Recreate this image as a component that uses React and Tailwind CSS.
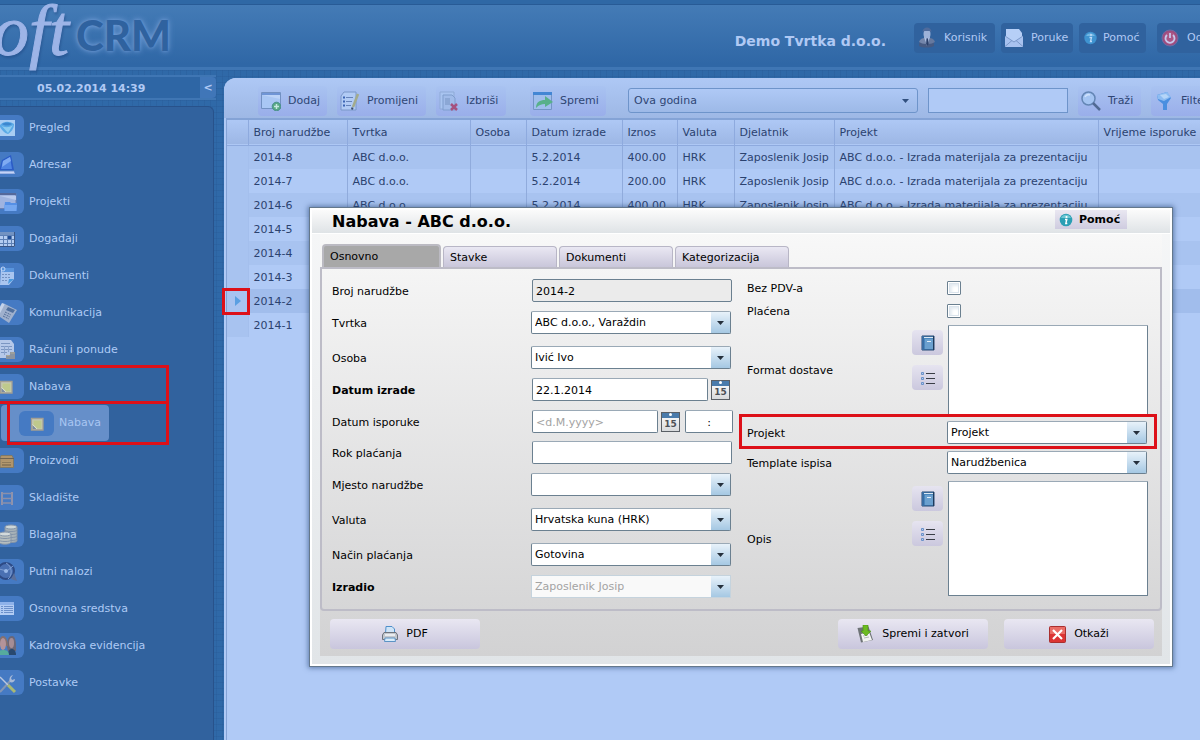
import React from "react";

const I = ({ w = 20, h = 20, children, className = "" }) => (
  <svg width={w} height={h} viewBox={`0 0 ${w} ${h}`} className={`shrink-0 ${className}`} aria-hidden="true">
    {children}
  </svg>
);

/* ---------- navigation icons, drawn on the 24x25 tile ---------- */
const note = (x) => (
  <g>
    <path d={`M${x} 7.500h11.500v11.500h-11.500z`} fill="#c6c9b4" stroke="#a39f93" strokeWidth="1.300" />
    <path d={`M${x + 2} 9.500h8v8h-4l-4-4z`} fill="#bfc98c" />
    <path d={`M${x + 1} 14l4 4h-4z`} fill="#7d8ba0" />
    <path d={`M${x + 1} 13.500l4.500 4.500`} stroke="#dadfc6" />
  </g>
);

const NAV = [
  ["Pregled", <g key="i"><path d="M0 5h15v16H0z" fill="#a9cdf3" /><path d="M0 10c4-4 9-4 14-1 0 5-3 8-6 10-4-1-6-4-8-7z" fill="#5aa9e6" /><path d="M1 10c3 3 8 3 12 0l-5 8z" fill="#8ccbf0" /><path d="M2 9c3-2 7-2 10 0-3 2-7 2-10 0z" fill="#3c87cf" /></g>],
  ["Adresar", <g key="i"><path d="M2 8l9-5 3 15H0v-3z" fill="#2b5cc6" /><path d="M3 9l7-4 2 12H1z" fill="#4f85e2" /><path d="M3 9l7-4 1 4-9 6z" fill="#7fabf2" /><path d="M0 19h14l1 3H0z" fill="#9db3e4" /><path d="M0 20.500h14" stroke="#c4d5f6" /></g>],
  ["Projekti", <g key="i"><path d="M-1 4.500h17v15H-1z" fill="#9fb4e0" stroke="#6d82b4" /><path d="M0 4h16v2H0z" fill="#54699b" /><path d="M0 7l16 4V7z" fill="#b9caee" /><path d="M5 13h5l1 1h6v8H4z" fill="#5590e6" /><path d="M4 16h13l-1 6H5z" fill="#74a7f0" /></g>],
  ["Događaji", <g key="i"><path d="M0 6h15v15H0z" fill="#b4ccf1" /><path d="M0 9.500h15M0 13.500h15M0 17.500h15M3.500 9v12M7.500 9v12M11.500 9v12" stroke="#5d80b5" fill="none" /><path d="M8 10h3v3H8z" fill="#1f4d96" /><path d="M0 6h15v3H0z" fill="#7393c2" /><path d="M14.500 6v14.500H0" stroke="#3b5685" fill="none" /></g>],
  ["Dokumenti", <g key="i"><path d="M1 5h13v11l-5 6H0z" fill="#a9c5ef" /><path d="M2 5h12v4H2z" fill="#5a95dc" /><path d="M2 11.500h9M2 14.500h9M2 17.500h5" stroke="#7391c0" strokeDasharray="2 1" /><path d="M8 21l1-5h5z" fill="#4a9ade" /><circle cx="3" cy="6" r="2" fill="none" stroke="#bed4f7" /></g>],
  ["Komunikacija", <g key="i"><path d="M5 4l12 6-8 13-9-6v-6z" fill="#9fb0cd" /><path d="M2 3l3 1-7 13-3-2z" fill="#c5d2e9" /><path d="M8 7l7 3-2 3-7-3z" fill="#506f9d" /><path d="M5 12l6 3M4 14l6 3M3 16l6 3" stroke="#536c96" strokeDasharray="2 1" /></g>],
  ["Računi i ponude", <g key="i"><path d="M0 3h11l3 4v14H0z" fill="#b5c8e9" /><path d="M1 6.500h9M1 9.500h11M1 12.500h11M1 15.500h6" stroke="#7b96c2" /><path d="M4.500 9v9M8.500 9v6" stroke="#8ba4cd" /><path d="M10 15h5v7h-5zM6 18h4v4H6z" fill="#8b939f" /><path d="M10.500 16h4M6.500 18.500h3" stroke="#b0ab97" /></g>],
  ["Nabava", <g key="i">{note(0.5)}</g>],
  ["Proizvodi", <g key="i"><path d="M1 7.500h11l1.500 3v9H0v-9z" fill="#b0946b" stroke="#7f7968" /><path d="M0 10.500h14" stroke="#6f6350" /><path d="M2 13h9v5H2z" fill="#8f7a5a" /><path d="M2 13.500h9M2 15.500h9" stroke="#b3986e" /></g>],
  ["Skladište", <g key="i"><path d="M2 7v13M12 7v13" stroke="#8f93ad" strokeWidth="2" /><path d="M2 8.500h10M2 13.500h10M2 18h10" stroke="#8b90ab" strokeWidth="1.500" /></g>],
  ["Blagajna", <g key="i" stroke="#8494a8"><path d="M5 5v14c0 2 12 2 12 0V5z" fill="#a7b2b8" /><ellipse cx="11" cy="5" rx="6" ry="2" fill="#cdd6d8" /><path d="M5 8c0 2 12 2 12 0M5 11c0 2 12 2 12 0M5 14c0 2 12 2 12 0M5 17c0 2 12 2 12 0" fill="none" /><path d="M-1 12v8c0 3 12 3 12 0v-8z" fill="#b5bdbe" /><ellipse cx="5" cy="12" rx="6" ry="2" fill="#d3dadb" /><path d="M-1 15c0 2 12 2 12 0M-1 18c0 2 12 2 12 0" fill="none" /></g>],
  ["Putni nalozi", <g key="i"><circle cx="6" cy="12" r="8" fill="#4a70b2" stroke="#2d4a85" strokeWidth="2" /><path d="M6 4c6 3 7 12 2 16M-1 10l8 2 6-5" stroke="#7f9ed2" fill="none" /><circle cx="6" cy="12" r="2" fill="#98b8e8" /><path d="M11 20l3-6 3 8z" fill="#5a6f9b" /></g>],
  ["Osnovna sredstva", <g key="i"><path d="M0 6h14v13H0z" fill="#b3ccf4" /><path d="M0 6h14v3H0z" fill="#8fb2ea" /><path d="M1 10.500h2M4 10.500h9M1 12.500h2M4 12.500h9M1 14.500h2M4 14.500h9M1 16.500h2M4 16.500h9" stroke="#6c90cb" /></g>],
  ["Kadrovska evidencija", <g key="i"><path d="M7 14c0-8 2-11 5-11s4 5 4 10v5H8z" fill="#6b6777" /><ellipse cx="11.500" cy="10" rx="2.500" ry="5" fill="#a58d95" /><path d="M8 22c0-5 2-6 4-6s4 2 4 6z" fill="#29496f" /><path d="M-1 13c0-8 2-10 4-10s5 3 5 10z" fill="#84706f" /><ellipse cx="3" cy="11" rx="3" ry="6" fill="#b3939a" /><path d="M-2 22c0-4 2-5 5-5s6 1 6 5z" fill="#56ab9d" /></g>],
  ["Postavke", <g key="i"><path d="M0 22L11 10" stroke="#8496b4" strokeWidth="2" /><path d="M13 5c-4 1-4 5-3 7 2 1 5 0 5-3l-3 1-1-2z" fill="#a9bad7" /><path d="M0 7l8 8" stroke="#b9c7e0" strokeWidth="1.500" /><path d="M8 15l7 7" stroke="#a9b973" strokeWidth="3" /></g>],
];

function NavItem({ label, icon, children }) {
  return (
    <li className="relative">
      <a href="#" className="flex h-[37px] items-center gap-[5px]">
        <span className="h-[25px] w-6 overflow-hidden rounded-r-md bg-[#457ac3]">
          <I w={24} h={25}>{icon}</I>
        </span>
        {label}
      </a>
      {children}
    </li>
  );
}

function Sidebar() {
  return (
    <aside className="flex w-[216px] shrink-0 flex-col pt-[5px]">
      <div className="flex h-[25px] border-y-2 border-[#3f76b4] bg-[#2e66a5]">
        <time className="flex-1 pl-[37px] text-[11px] leading-[23px] font-bold text-[#b0c9f4]">05.02.2014 14:39</time>
        <button aria-label="Sakrij izbornik" className="w-4 rounded-r bg-[#4076b8] font-bold text-[#b0c9f4]">&lt;</button>
      </div>
      <nav className="mt-[6px] mr-0.5 flex-1 rounded-tr-md border-t border-r border-[#28528b] bg-[#31629e] pt-0.5 text-[#aecaf5]">
        <ul>
          {NAV.map(([label, icon]) => (
            <NavItem key={label} label={label} icon={icon}>
              {label === "Nabava" && (
                <>
                  <div className="pointer-events-none absolute -top-[3px] -left-[3px] h-[39px] w-[172px] border-3 border-[#dd1018]" />
                  <ul className="relative h-[37px]">
                    <li>
                      <a href="#" className="ml-px flex h-9 w-[108px] items-center gap-[5px] rounded-sm bg-[#668fc9] pl-[18px] text-[#a9c6f2]">
                        <span className="h-[25px] w-[35px] rounded-md bg-[#457ac3]">
                          <I w={35} h={25}>{note(12.5)}</I>
                        </span>
                        Nabava
                      </a>
                    </li>
                    <li aria-hidden="true" className="pointer-events-none absolute -top-1 left-[7px] h-11 w-[162px] border-3 border-[#dd1018]" />
                  </ul>
                </>
              )}
            </NavItem>
          ))}
        </ul>
      </nav>
    </aside>
  );
}

function HeaderButton({ icon, label, className }) {
  return (
    <button className={`flex h-[30px] shrink-0 items-center rounded bg-[#30629e] text-[#b0c9f4] ${className}`}>
      {icon}
      {label}
    </button>
  );
}

function Header() {
  return (
    <header className="h-[70px] border-b-3 border-[#3f76b4] bg-[linear-gradient(#2f68a5_0,#2f68a5_4px,#285b96_4px,#285b96_5px,#447bb6_5px,#2f67a6_64px)]">
      <div className="-mr-10 flex h-full items-start">
        <div className="flex h-[67px] items-start">
          <div className="flex w-[69px] justify-end font-['Liberation_Serif'] text-[72px] leading-[62px] text-[#9db4e7] italic drop-shadow-[1px_2px_1px_rgba(30,70,130,0.5)] [-webkit-text-stroke:1px_#9db4e7]">
            Soft
          </div>
          <div className="pl-[7px] font-[Lato] text-[42px] leading-[70px] font-black text-[#2f629f] [text-shadow:0_0_6px_#7aa4dc,0_0_3px_#5a8ac8]">
            CRM
          </div>
        </div>
        <div className="mt-[23px] ml-auto flex items-center">
          <div className="mt-[5px] mr-[28px] text-[14px] font-bold text-[#b0c9f4]">Demo Tvrtka d.o.o.</div>
          <HeaderButton label="Korisnik" className="mr-1.5 w-[81px] gap-2 pl-1" icon={
            <I w={18} h={22}><path d="M1 19c0-6 3-8 8-8s7 2 7 8c-4 2-11 2-15 0z" fill="#465a82" /><path d="M2 13c2-2 4-2 5-2l1 6c-3 0-5-1-7-2z" fill="#7486ab" /><path d="M16 13c-2-2-4-2-5-2l-1 6c3 0 5-1 7-2z" fill="#66799f" /><path d="M6 10h6l-3 9z" fill="#b2c4e6" /><path d="M8.500 11h1.500l.5 6-1.200 2-1.200-2z" fill="#2a3f69" /><ellipse cx="9" cy="7" rx="3.500" ry="4.500" fill="#9db2d8" /><path d="M4.500 5c0-6 9-6 9 0l-2-1H6.500z" fill="#4f6b9c" /></I>} />
          <HeaderButton label="Poruke" className="mr-1.5 w-[72px] gap-2 pl-1" icon={
            <I w={18} h={20}><path d="M0 8h18v11H0z" fill="#9ab5e3" /><path d="M1 1h13l3 4v9H1z" fill="#b6cff7" /><path d="M0 8l9 6 9-6v11H0z" fill="#a8c2ef" /><path d="M0 18.500l7-6M18 18.500l-7-6M0 8l9 6 9-6" stroke="#7b98c9" fill="none" /></I>} />
          <HeaderButton label="Pomoć" className="mr-[11px] w-[67px] gap-[6px] pl-[5px]" icon={
            <I w={13} h={14}><circle cx="6.500" cy="7" r="6.200" fill="#3f93d0" /><path d="M2 5a5 5 0 0 1 9 0z" fill="#73b7e4" /><circle cx="7" cy="4" r="1" fill="#bddaf8" /><path d="M5.500 6.500h2l-1 4h1.500" stroke="#bddaf8" fill="none" strokeWidth="1.300" /></I>} />
          <HeaderButton label="Odjava" className="w-[83px] gap-2 pl-1" icon={
            <I w={18} h={18}><circle cx="9" cy="9" r="8" fill="#9c4d80" stroke="#6d6ca4" /><circle cx="9" cy="9" r="6" fill="#ab5685" /><path d="M6 6a4.500 4.500 0 1 0 6 0M9 4v5" stroke="#c5c7ec" fill="none" strokeWidth="1.800" /></I>} />
        </div>
      </div>
    </header>
  );
}

function ToolButton({ icon, label, className }) {
  return (
    <button className={`flex h-[30px] shrink-0 items-center gap-[7px] rounded-sm bg-gradient-to-b from-[#a9c3f1] to-[#9aaeea] pl-[3px] text-[#2f4674] ${className}`}>
      <I>{icon}</I>
      {label}
    </button>
  );
}

function Toolbar() {
  return (
    <div className="-mr-[19px] flex h-10 items-start rounded-tl-xl bg-gradient-to-b from-[#aec8f5] to-[#9eb8e5] pt-2 pl-[34px]">
      <ToolButton label="Dodaj" className="mr-2.5 w-[69px]" icon={<g><path d="M.5 1.500h19v16H.5z" fill="#a9c7f4" stroke="#7291c2" /><path d="M1 2h18v2H1z" fill="#6f95d6" /><path d="M1 4l18 4V4z" fill="#bbd3f8" /><circle cx="15.500" cy="15.500" r="4.300" fill="#57a884" stroke="#4a8f8d" /><path d="M15.500 13v5M13 15.500h5" stroke="#c7e8e0" strokeWidth="1.500" /></g>} />
      <ToolButton label="Promijeni" className="mr-2.5 w-[89px]" icon={<g><path d="M4 1h12v18H1V5z" fill="#b1cbf5" stroke="#7b97c8" /><path d="M6 6.500h7M6 10.500h6M6 14.500h5" stroke="#6784ba" /><path d="M3 6.500h2M3 10.500h2M3 14.500h2" stroke="#3b64b3" strokeWidth="2" /><path d="M18 3l-5 13" stroke="#a3ab8c" strokeWidth="2.500" /><path d="M12.500 16.500l-.5 2" stroke="#3a4b6b" strokeWidth="2" /></g>} />
      <ToolButton label="Izbriši" className="mr-[24px] w-[70px]" icon={<g><path d="M1 1h14v17H1z" fill="#a8c4f0" stroke="#8faad7" /><path d="M4 4h9l3 3v12H4z" fill="#a0bbe9" stroke="#7f9dcd" /><path d="M6 7h5v7H6z" fill="#8ba7d5" /><path d="M12 13l6 6M18 13l-6 6" stroke="#a5517f" strokeWidth="2.500" /></g>} />
      <ToolButton label="Spremi" className="mr-[22px] w-[76px]" icon={<g><path d="M.5 1.500h18v17H.5z" fill="#9fbdec" stroke="#7494c6" /><path d="M0 1h19v3H0z" fill="#4386d4" /><path d="M3 17c0-6 4-8 9-8V5l8 6-8 5v-3c-4 0-6 1-9 4z" fill="#58b08a" /></g>} />
      <div className="relative mt-0.5 mr-2.5 h-[25px] flex-1">
        <select aria-label="Razdoblje" className="h-full w-full appearance-none rounded-[3px] border border-[#6e94ca] bg-gradient-to-b from-[#afc9f6] to-[#9db9e7] px-[5px] pt-px text-[#2f4674]">
          <option>Ova godina</option>
        </select>
        <I w={7} h={4} className="pointer-events-none absolute top-[11px] right-[9px]"><path d="M0 0h7L3.500 4z" fill="#31507f" /></I>
      </div>
      <input aria-label="Pojam za pretragu" className="mt-0.5 mr-2.5 h-[25px] w-[140px] shrink-0 border border-[#6e94ca] bg-[#b0caf6] px-1" />
      <ToolButton label="Traži" className="mr-2.5 w-[63px]" icon={<g><circle cx="7.500" cy="7.500" r="6.500" fill="#a4c4f2" stroke="#6486b5" strokeWidth="1.500" /><path d="M4 6a4 4 0 0 1 5-2" stroke="#cfe1fb" fill="none" strokeWidth="1.500" /><path d="M12 12l7 7" stroke="#516a94" strokeWidth="2.500" /></g>} />
      <ToolButton label="Filter" className="w-[68px]" icon={<g><path d="M3 4l10-3 4 6-4 6v6H9v-6L4 9z" fill="#4a8fe0" /><path d="M3 4l10-3 4 5-7 4-6-2z" fill="#8dbcf2" /><path d="M6 4l6-1 3 3-5 2z" fill="#b5d5f8" /></g>} />
    </div>
  );
}

const P = "ABC d.o.o. - Izrada materijala za prezentaciju";
const ROWS = [8, 7, 6, 5, 4, 3, 2, 1].map((n) => [
  `2014-${n}`, "ABC d.o.o.", "", "5.2.2014", n === 7 ? "200.00" : "400.00", "HRK", "Zaposlenik Josip", P, "",
]);
const HEADS = ["Broj narudžbe", "Tvrtka", "Osoba", "Datum izrade", "Iznos", "Valuta", "Djelatnik", "Projekt", "Vrijeme isporuke"];

function OrdersTable() {
  return (
    <table className="w-full table-fixed border-collapse text-left whitespace-nowrap text-[#2b426f]">
      <colgroup>
        <col className="w-[21px]" />
        <col className="w-[99px]" />
        <col className="w-[123px]" />
        <col className="w-[56px]" />
        <col className="w-[96px]" />
        <col className="w-[55px]" />
        <col className="w-[57px]" />
        <col className="w-[100px]" />
        <col className="w-[264px]" />
        <col />
      </colgroup>
      <thead>
        <tr className="h-[25px] border-b border-[#8eaade] bg-gradient-to-b from-[#aec8f5] to-[#9db7e5]">
          <th aria-label="Oznaka retka" className="border-r border-[#8eaade]" />
          {HEADS.map((h) => (
            <th key={h} className="border-r border-[#8eaade] p-0 pt-0.5 pl-[5px] font-normal last:border-r-0">{h}</th>
          ))}
        </tr>
      </thead>
      <tbody>
        {ROWS.map((r, i) => (
          <tr key={r[0]} className={`h-6 ${r[0] === "2014-2" ? "bg-[#a1bdec]" : i % 2 ? "bg-[#b0caf6]" : "bg-[#a8c3f0]"}`}>
            <td className="relative border-r border-[#a4bfed] bg-[#a8c3f0] p-0">
              {r[0] === "2014-2" && (
                <>
                  <I w={6} h={10} className="ml-2"><path d="M0 0l6 5-6 5z" fill="#5a9fe2" /></I>
                  <div className="pointer-events-none absolute -top-px -left-[5px] z-10 h-[27px] w-7 border-3 border-[#dd1018]" />
                </>
              )}
            </td>
            {r.map((c, j) => (
              <td key={j} className="border-r border-[#90abdc] p-0 pt-0.5 pl-[5px] last:border-r-0">{c}</td>
            ))}
          </tr>
        ))}
      </tbody>
    </table>
  );
}

const FIELD = "h-[23px] rounded-[2px] border border-[#6b8090] border-t-[#9aa9b6] bg-white px-[3px] pt-px";
const INPUT = `${FIELD} ml-px`;

function Select({ id, value, disabled }) {
  return (
    <div className="relative h-[23px] w-[200px]">
      <select id={id} disabled={disabled} className={disabled ? "h-full w-full appearance-none border border-[#c5d3dd] bg-[#f9f9f9] px-[3px] pt-px text-[#a3a3a3] opacity-100" : `${FIELD} w-full appearance-none`}>
        <option>{value}</option>
      </select>
      <span className="pointer-events-none absolute inset-y-px right-px flex w-[19px] items-center justify-center bg-gradient-to-b from-[#e8f2fa] to-[#a5c8e3]">
        <I w={7} h={4}><path d="M0 0h7L3.500 4z" fill="#25303c" /></I>
      </span>
    </div>
  );
}

function CalendarButton({ label, className = "" }) {
  return (
    <button type="button" aria-label={label} className={`mt-0.5 flex h-5 w-[19px] shrink-0 flex-col border border-[#5a5f65] bg-gradient-to-b from-white to-[#d8dadc] ${className}`}>
      <span className="flex h-[5px] w-full justify-center bg-[#4a7bab]"><span className="h-[3px] w-[3px] rounded-full bg-white" /></span>
      <span className="w-full text-center text-[9px] leading-[13px] font-bold text-[#4c5157]">15</span>
    </button>
  );
}

function Row({ id, label, bold, className = "h-8", children }) {
  return (
    <div className={`flex items-start ${className}`}>
      <label htmlFor={id} className={`w-[199px] shrink-0 leading-[25px] ${bold ? "font-bold" : ""}`}>{label}</label>
      {children}
    </div>
  );
}

function CheckRow({ id, label }) {
  return (
    <div className="flex h-[23px] items-center justify-between">
      <label htmlFor={id} className="pt-0.5">{label}</label>
      <span className="flex w-[201px]">
        <input id={id} type="checkbox" className="h-3.5 w-3.5 appearance-none rounded-[1px] border border-[#6b8090] bg-white shadow-[inset_0_0_0_1px_#fff,inset_0_0_0_2px_#dbe4ec,inset_2px_2px_3px_2px_#e4ebf1]" />
      </span>
    </div>
  );
}

function SelectRow({ id, label, value }) {
  return (
    <div className="flex h-[23px] items-center justify-between">
      <label htmlFor={id} className="pt-0.5">{label}</label>
      <span className="w-[201px]"><Select id={id} value={value} /></span>
    </div>
  );
}

function AreaRow({ id, label, className }) {
  const btn = "flex h-[25px] w-[31px] items-center justify-center rounded-sm bg-gradient-to-b from-[#e6e4f0] to-[#cbc8de]";
  return (
    <div className={`flex items-stretch ${className}`}>
      <label htmlFor={id} className="flex flex-1 items-center pt-0.5">{label}</label>
      <div className="mr-[5px] flex flex-col gap-2.5 pt-[5px]">
        <button type="button" aria-label={`${label}: predložak`} className={btn}>
          <I w={14} h={16}><path d="M1 1h12v14H1z" fill="#4a86bd" stroke="#274a74" /><path d="M1 1h2v14H1z" fill="#3a6da3" /><path d="M3 2.500h9" stroke="#dce9f5" /><path d="M4 4h8v10H4z" fill="#6ba0cf" /><path d="M12.500 1v14" stroke="#1e3a5c" /><path d="M6 6.500h4" stroke="#e3eef8" /></I>
        </button>
        <button type="button" aria-label={`${label}: popis`} className={btn}>
          <I w={14} h={14}><path d="M5 2.500h9M5 7.500h9M5 12.500h9" stroke="#3a3e46" /><path d="M.5 1.500h2v2h-2zM.5 6.500h2v2h-2zM.5 11.500h2v2h-2z" fill="#b4cdf0" stroke="#6b91c9" /></I>
        </button>
      </div>
      <textarea id={id} className="w-[200px] resize-none rounded-[1px] border border-[#6b8090] border-t-[#9aa9b6] bg-white px-[3px]" />
    </div>
  );
}

function FooterButton({ icon, label, className = "" }) {
  return (
    <button type="button" className={`flex h-[30px] w-[150px] items-center justify-center gap-2 rounded-sm bg-gradient-to-b from-[#e9e7f2] to-[#c9c6dd] ${className}`}>
      {icon}
      {label}
    </button>
  );
}

function Dialog() {
  return (
    <div role="dialog" aria-label="Nabava - ABC d.o.o." className="absolute top-[207px] left-[309px] w-[864px] border border-[#64788c] shadow-[0_0_5px_1px_rgba(40,70,120,0.6)]">
      <form className="border-2 border-white bg-gradient-to-b from-[#f6f7f8] to-[#e1e5e8]">
        <div className="flex h-6 items-start justify-between border-b border-white bg-gradient-to-b from-[#fbfbfb] to-[#dfe3e6] pr-[43px] pl-5">
          <h1 className="text-[16px] leading-[23px] font-bold">Nabava - ABC d.o.o.</h1>
          <button type="button" className="flex h-[19px] w-[72px] items-center gap-1.5 bg-gradient-to-b from-[#e9e7f1] to-[#cfcce0] pl-1 font-bold">
            <I w={14} h={14}><circle cx="7" cy="7" r="6.300" fill="#2b9fb4" /><path d="M2 5a5.500 5.500 0 0 1 10 0z" fill="#6cc6d3" /><circle cx="7.500" cy="4" r="1.100" fill="#fff" /><path d="M6 6.500h1.800l-1 4h1.500" stroke="#fff" fill="none" strokeWidth="1.400" /></I>
            Pomoć
          </button>
        </div>
        <div className="mx-2 mb-2 bg-gradient-to-b from-[#f8f8f8] to-[#d2d2d3] pt-2.5">
          <div role="tablist" className="flex items-end gap-0.5 pl-0.5">
            {["Osnovno", "Stavke", "Dokumenti", "Kategorizacija"].map((t, i) => (
              <button key={t} type="button" role="tab" aria-selected={i === 0} className={i === 0
                ? "h-[23px] w-[119px] rounded-t border-2 border-b-0 border-[#bbbac2] bg-[#a8a8a8] pl-1.5 text-left"
                : "h-[21px] w-[114px] rounded-t border border-b-0 border-[#b8b6c6] bg-gradient-to-b from-[#eae8f3] to-[#c9c6da] pt-px pl-1.5 text-left"}>
                {t}
              </button>
            ))}
          </div>
          <div className="flex gap-[15px] rounded-b border-2 border-[#bdbcc7] pt-[7px] pr-3 pb-0.5 pl-2.5">
            <div className="w-[400px] shrink-0 pt-[3px]">
              <Row id="broj" label="Broj narudžbe">
                <input id="broj" readOnly defaultValue="2014-2" className="ml-px h-[23px] w-[200px] rounded-[2px] border border-[#6b8090] bg-[#ebebeb] px-[3px] pt-px" />
              </Row>
              <Row id="tvrtka" label="Tvrtka" className="h-[35px]"><Select id="tvrtka" value="ABC d.o.o., Varaždin" /></Row>
              <Row id="osoba" label="Osoba"><Select id="osoba" value="Ivić Ivo" /></Row>
              <Row id="izrade" label="Datum izrade" bold>
                <input id="izrade" defaultValue="22.1.2014" className={`${INPUT} mr-[3px] w-[176px] shrink-0`} />
                <CalendarButton label="Odaberi datum izrade" />
              </Row>
              <Row id="isporuke" label="Datum isporuke" className="h-[31px]">
                <input id="isporuke" placeholder="<d.M.yyyy>" className={`${INPUT} mr-[3px] w-[126px] shrink-0 placeholder:text-[#a3a3a3]`} />
                <CalendarButton label="Odaberi datum isporuke" className="mr-1" />
                <input aria-label="Vrijeme isporuke" defaultValue=":" className={`${INPUT} w-12 shrink-0 text-center`} />
              </Row>
              <Row id="rok" label="Rok plaćanja"><input id="rok" className={`${INPUT} w-[200px]`} /></Row>
              <Row id="mjesto" label="Mjesto narudžbe" className="h-[35px]"><Select id="mjesto" value="" /></Row>
              <Row id="valuta" label="Valuta" className="h-[35px]"><Select id="valuta" value="Hrvatska kuna (HRK)" /></Row>
              <Row id="nacin" label="Način plaćanja"><Select id="nacin" value="Gotovina" /></Row>
              <Row id="izradio" label="Izradio" bold><Select id="izradio" value="Zaposlenik Josip" disabled /></Row>
            </div>
            <div className="flex-1">
              <CheckRow id="pdv" label="Bez PDV-a" />
              <CheckRow id="placena" label="Plaćena" />
              <AreaRow id="format" label="Format dostave" className="mt-[3px] h-[90px]" />
              <div className="relative mt-1.5">
                <SelectRow id="projekt" label="Projekt" value="Projekt" />
                <div className="pointer-events-none absolute -top-[7px] -right-[9px] -bottom-[5px] -left-2 border-3 border-[#dd1018]" />
              </div>
              <div className="mt-[7px]"><SelectRow id="template" label="Template ispisa" value="Narudžbenica" /></div>
              <AreaRow id="opis" label="Opis" className="mt-[7px] h-[115px]" />
            </div>
          </div>
          <div className="flex pt-2 pr-2 pb-[7px] pl-2.5">
            <FooterButton label="PDF" className="mr-auto" icon={
              <I w={16} h={16}><path d="M4 .5h6l2.500 2.500v5h-9z" fill="#cfe4f7" stroke="#4f8fca" /><path d="M2 6.500h12l1.500 2.500v4.500H.5V9z" fill="#c3c7cd" stroke="#6d737d" /><path d="M3 8h10v2H3z" fill="#e9ecef" /><path d="M3 12h10l.5 3.500h-11z" fill="#d9ecfb" stroke="#5c93c4" /></I>} />
            <FooterButton label="Spremi i zatvori" className="mr-4" icon={
              <I w={17} h={18}><path d="M.5 3l11-1.500L16 15 4 17.500z" fill="#6e7377" /><path d="M4 9l8-2 3 8-9 2z" fill="#f2f3f2" /><path d="M6 11l5-1M7 13l5-1" stroke="#b4b8b8" /><path d="M6 0h5v6h3L9 11 4 6h2z" fill="#6cba22" stroke="#4b9412" strokeWidth=".6" /></I>} />
            <FooterButton label="Otkaži" icon={
              <I w={17} h={17}><rect x=".5" y=".5" width="16" height="16" rx="1" fill="#dc3434" stroke="#a92f2f" /><path d="M1 1h15v7H1z" fill="#ea6c66" /><path d="M4 4l9 9M13 4l-9 9" stroke="#fff" strokeWidth="2.200" /></I>} />
          </div>
        </div>
      </form>
    </div>
  );
}

export default function App() {
  return (
    <div className="relative flex min-h-screen flex-col overflow-hidden bg-[#2f69a8] font-['DejaVu_Sans',sans-serif] text-[11px] leading-[14px] text-black">
      <Header />
      <div className="flex flex-1 bg-[repeating-linear-gradient(90deg,rgba(40,90,150,0.35)_0_1px,transparent_1px_6px),repeating-linear-gradient(rgba(40,90,150,0.35)_0_1px,transparent_1px_6px)]">
        <Sidebar />
        <main className="mt-2 ml-2 flex min-w-0 flex-1 flex-col rounded-tl-xl bg-[#b0caf6]">
          <Toolbar />
          <div className="ml-0.5 flex-1 border-t-2 border-l border-[#84a3d6]">
            <OrdersTable />
          </div>
        </main>
      </div>
      <Dialog />
    </div>
  );
}
